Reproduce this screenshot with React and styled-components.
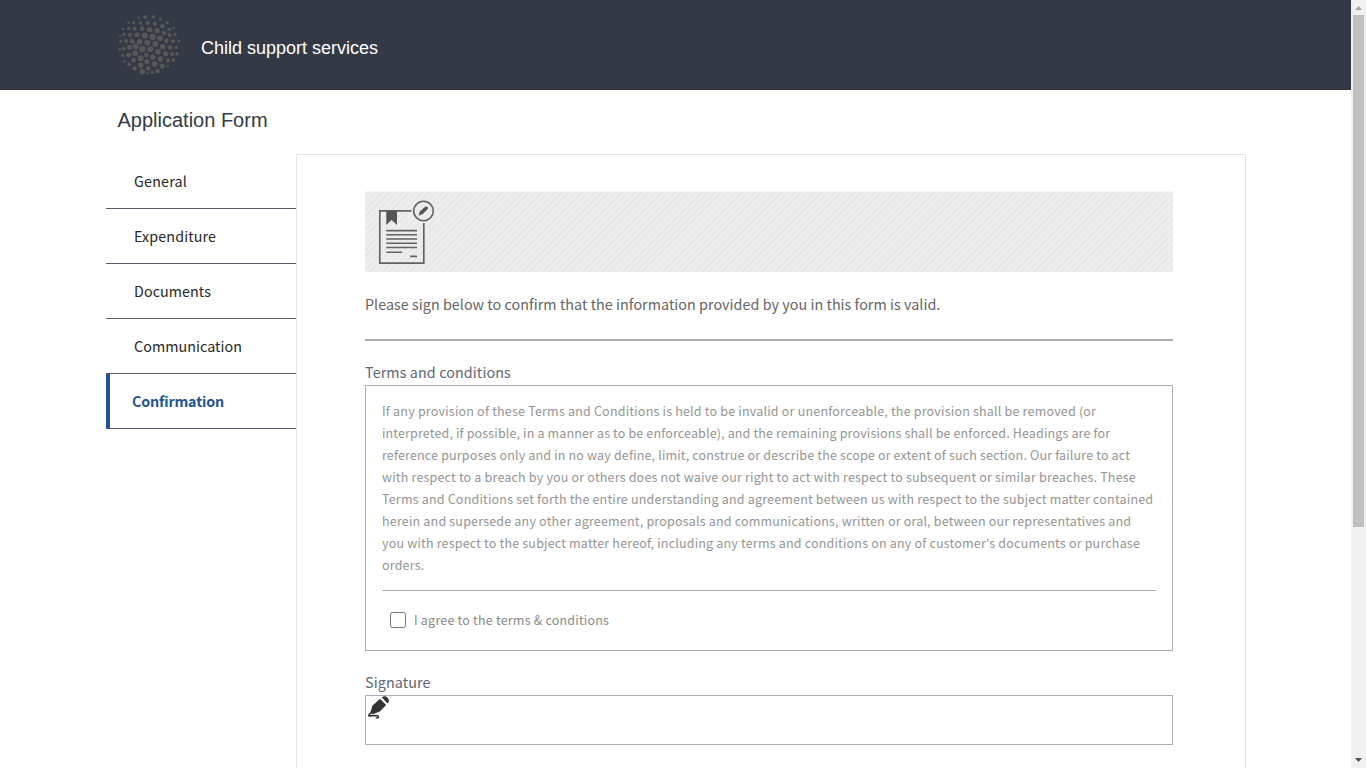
import React from 'react';
import styled, { createGlobalStyle } from 'styled-components';

const GlobalStyle = createGlobalStyle`
  * { box-sizing: border-box; }
  body {
    margin: 0;
    overflow: hidden;
    background: #fff;
    font-family: "Noto Sans CJK SC", "Open Sans", sans-serif;
  }
`;

const Window = styled.div`
  display: flex;
  height: 768px;
  overflow: hidden;
`;

const Page = styled.div`
  flex: 1;
  min-width: 0;
`;

const Header = styled.header`
  height: 90px;
  padding-left: 117px;
  display: flex;
  align-items: flex-start;
  background: #333a46;
  border-bottom: 1px solid #322f3d;
`;

const Logo = styled.svg`
  width: 64px;
  height: 64px;
  margin-top: 13px;
  fill: #575757;
`;

const SiteName = styled.div`
  margin: 37px 0 0 20px;
  font: 18px/22px "Liberation Sans", Arial, sans-serif;
  color: #fff;
`;

const FormTitle = styled.h1`
  margin: 0;
  height: 64px;
  padding: 18px 0 0 117.5px;
  font: 400 20px/24px "Liberation Sans", Arial, sans-serif;
  color: #333a46;
`;

const Columns = styled.div`
  display: flex;
  align-items: flex-start;
  padding-left: 106px;
`;

const Nav = styled.nav`
  width: 190px;
`;

const NavItem = styled.a`
  display: block;
  height: 55px;
  padding-left: ${(p) => (p.$active ? 22 : 28)}px;
  border-bottom: 1px solid #555b6a;
  border-left: ${(p) => (p.$active ? '4px solid #1f5493' : '0')};
  font-size: 14.3px;
  line-height: 54px;
  letter-spacing: ${(p) => p.$tracking}px;
  font-weight: ${(p) => (p.$active ? 700 : 400)};
  color: ${(p) => (p.$active ? '#1f5493' : '#262626')};
`;

const Panel = styled.main`
  width: 950px;
  height: 900px;
  padding: 36px 72px 0 68px;
  border: 1px solid #e4e4e4;
`;

const Banner = styled.div`
  height: 81px;
  padding: 7px 0 0 12px;
  border-top: 1px solid #f6f6f6;
  background: repeating-linear-gradient(135deg, #eee 0 2px, #e7e7e7 2.8px 3.8px, #eee 4.7px) padding-box;
`;

const FormIcon = styled.svg`
  display: block;
  width: 60px;
  height: 68px;
`;

const Intro = styled.p`
  margin: 0;
  padding-top: 20px;
  height: 69px;
  border-bottom: 2px solid #adadb3;
  font-size: 14.3px;
  line-height: 24px;
  letter-spacing: 0.055px;
  color: #646464;
`;

const Label = styled.div`
  height: 44px;
  padding-top: 19px;
  font-size: 14.3px;
  line-height: 24px;
  letter-spacing: 0.12px;
  color: #606674;
`;

const TermsBox = styled.section`
  height: 266px;
  padding: 14px 16px 0;
  border: 1px solid #adadb3;
  font-size: 12.53px;
  line-height: 22px;
  color: #959595;
`;

const TermsText = styled.div`
  height: 191px;
  white-space: nowrap;
  border-bottom: 1px solid #adadb3;
`;

const TermsLine = styled.div`
  letter-spacing: ${(p) => p.$tracking}px;
`;

const Agree = styled.label`
  display: flex;
  align-items: center;
  gap: 8px;
  padding: 18px 0 0 8px;
  letter-spacing: 0.2px;
  color: #8a8a8a;
`;

const Checkbox = styled.input`
  width: 16px;
  height: 16px;
  margin: 0;
`;

const SignatureBox = styled.div`
  height: 50px;
  border: 1px solid #adadb3;
`;

const PenIcon = styled.svg`
  display: block;
  width: 24px;
  height: 24px;
`;

const ScrollBar = styled.div`
  width: 15px;
  height: 768px;
  display: flex;
  flex-direction: column;
  align-items: center;
  background: #f0f0f0;
`;

const ScrollArrow = styled.svg`
  width: 15px;
  height: 15px;
  flex: none;
`;

const ScrollThumb = styled.div`
  width: 11px;
  height: 512px;
  margin-bottom: auto;
  background: #c0c0c0;
`;

const DOTS = [
  [116, 54, 4], [136, 51, 6], [160, 51, 5.5], [181, 57, 4.5],
  [86, 69, 4], [101, 68, 5], [121, 69, 5.5], [143, 69, 6.5], [165, 72, 6.5], [187, 78, 7], [202, 68, 5],
  [70, 87, 4], [86, 85, 5], [104, 86, 6], [127, 86, 7], [149, 89, 8], [171, 92, 8], [192, 99, 7], [207, 88, 5], [221, 84, 4],
  [60, 109, 3], [72, 103, 5], [90, 104, 6], [111, 104, 7.5], [134, 107, 9], [158, 111, 9.5], [180, 115, 8.5], [209, 105, 6], [225, 103, 5],
  [62, 124, 5], [78, 123, 6], [97, 124, 7], [119, 125, 8.5], [142, 128, 9], [166, 132, 9], [199, 122, 7], [219, 124, 6], [236, 123, 4],
  [188, 140, 8], [210, 142, 7], [229, 142, 5],
  [59, 148, 4], [72, 146, 5.5], [89, 142, 7.5], [107, 139, 8.5], [127, 147, 10], [151, 148, 9], [174, 155, 8.5],
  [68, 166, 5], [86, 165, 7.5], [106, 160, 9], [139, 165, 7], [197, 161, 8], [216, 162, 6], [231, 162, 5],
  [73, 184, 4], [101, 181, 7], [122, 175, 9], [158, 171, 8], [181, 177, 8], [204, 182, 6.5], [220, 180, 5],
  [88, 193, 6], [122, 196, 8.5], [141, 185, 8], [164, 192, 9], [187, 199, 7.5], [204, 198, 3.5],
  [104, 205, 6.5], [145, 205, 7], [127, 215, 8], [173, 213, 7], [157, 218, 5], [142, 220, 3.5],
];

const NAV = [
  ['General', 0.2],
  ['Expenditure', 0.13],
  ['Documents', 0.07],
  ['Communication', 0.05],
  ['Confirmation', -0.15],
];

const TERMS = [
  ['If any provision of these Terms and Conditions is held to be invalid or unenforceable, the provision shall be removed (or', 0.193],
  ['interpreted, if possible, in a manner as to be enforceable), and the remaining provisions shall be enforced. Headings are for', 0.138],
  ['reference purposes only and in no way define, limit, construe or describe the scope or extent of such section. Our failure to act', 0.152],
  ['with respect to a breach by you or others does not waive our right to act with respect to subsequent or similar breaches. These', 0.18],
  ['Terms and Conditions set forth the entire understanding and agreement between us with respect to the subject matter contained', 0.185],
  ['herein and supersede any other agreement, proposals and communications, written or oral, between our representatives and', 0.182],
  ["you with respect to the subject matter hereof, including any terms and conditions on any of customer's documents or purchase", 0.18],
  ['orders.', 0.18],
];

export default function App() {
  return (
    <>
      <GlobalStyle />
      <Window>
        <Page>
          <Header>
            <Logo viewBox="51 39 192 192">
              {DOTS.map(([x, y, r]) => (
                <circle key={`${x}-${y}`} cx={x} cy={y} r={r} />
              ))}
            </Logo>
            <SiteName>Child support services</SiteName>
          </Header>
          <FormTitle>Application Form</FormTitle>
          <Columns>
            <Nav>
              {NAV.map(([name, tracking]) => (
                <NavItem key={name} $active={name === 'Confirmation'} $tracking={tracking}>{name}</NavItem>
              ))}
            </Nav>
            <Panel>
              <Banner>
                <FormIcon viewBox="377 199 60 68" fill="none" stroke="#636363">
                  <path d="M411.5 210.8H379.8V263.2H423.8V223" strokeWidth="1.7" />
                  <path d="M386.3 211H397V225L391.6 220L386.3 225Z" fill="#555" stroke="none" />
                  <path d="M386.3 230.6H417M386.3 234.8H417M386.3 239H417M386.3 243.2H417M386.3 247.5H417M386.3 252.2H402M410 256.4H417" strokeWidth="1.6" />
                  <circle cx="423.5" cy="211" r="9.8" strokeWidth="1.6" />
                  <path d="M418.7 215.7L419.8 211.6L425.2 206.8Q427.6 206 428.2 208.6L422.8 213.9Z" fill="#555" stroke="none" />
                </FormIcon>
              </Banner>
              <Intro>Please sign below to confirm that the information provided by you in this form is valid.</Intro>
              <Label>Terms and conditions</Label>
              <TermsBox>
                <TermsText>
                  {TERMS.map(([line, tracking]) => (
                    <TermsLine key={line} $tracking={tracking}>{line}</TermsLine>
                  ))}
                </TermsText>
                <Agree>
                  <Checkbox type="checkbox" />
                  I agree to the terms &amp; conditions
                </Agree>
              </TermsBox>
              <Label>Signature</Label>
              <SignatureBox>
                <PenIcon viewBox="366 696 24 24" fill="#333">
                  <path d="M380 698.8L386.2 705L379.8 711.6L372.6 714.2L370.4 712.6L372.4 705.8Z" />
                  <path d="M381.9 697.4Q384.8 695 387.6 697.7Q390.2 700.6 387.6 703.4Z" />
                  <path d="M372 711.8L369 714.8Q368.2 716 370 715.9L375.8 715.5Q379.6 715.8 378 717.7L375.8 718" fill="none" stroke="#333" strokeWidth="1.6" />
                </PenIcon>
              </SignatureBox>
            </Panel>
          </Columns>
        </Page>
        <ScrollBar>
          <ScrollArrow viewBox="0 0 15 15"><path d="M4 10L7.5 6L11 10Z" fill="#a3a3a3" /></ScrollArrow>
          <ScrollThumb />
          <ScrollArrow viewBox="0 0 15 15"><path d="M4 5L7.5 9L11 5Z" fill="#505050" /></ScrollArrow>
        </ScrollBar>
      </Window>
    </>
  );
}
